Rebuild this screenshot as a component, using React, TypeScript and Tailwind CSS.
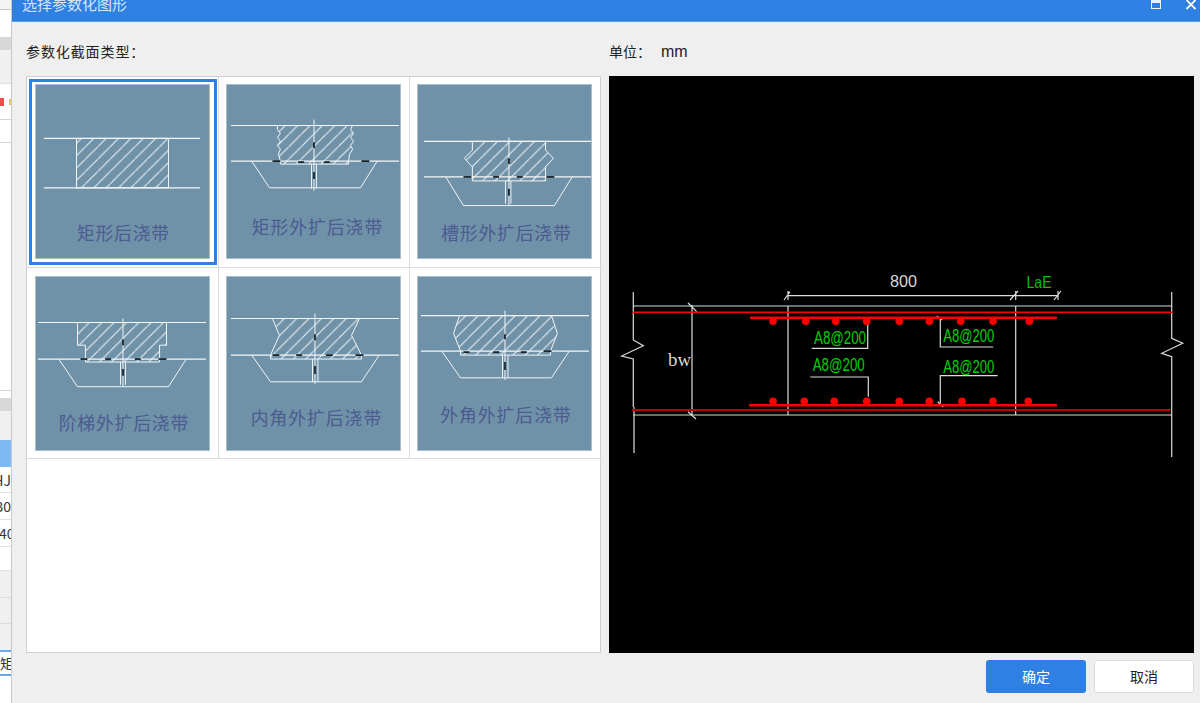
const font = "font-['Noto_Sans_CJK_SC','Noto_Sans',sans-serif]";

type Section = {
  name: string;
  cx: number;
  cy: number;
  tw: number;
  size: number;
  cell: string;
  xa: number;
  xb: number;
  y1: number;
  y2: number;
  shape: string;
  trap: string;
  axis: number;
  axisTop: number;
  axisEnd: number;
  jl: number;
  jr: number;
  jointTop: number;
  marks: number[][];
};

const sections: Section[] = [
  {
    name: "矩形外扩后浇带", cx: 91, cy: 145, tw: 132, size: 18,
    cell: "pl-[7px] pt-[7px] border-r border-b border-[#dcdcdc]",
    xa: 4, xb: 174, y1: 41, y2: 77,
    shape: "51,41 127,41 125,45 128,49 125,53 128,57 125,61 127,65 124,70 123,77 123,80 54,80 54,77 52,70 54,65 51,61 54,57 51,53 54,49 51,45",
    trap: "25,77 43,104 135,104 152,77", axis: 88, axisTop: 35, axisEnd: 107, jl: 85.5, jr: 90.5, jointTop: 80,
    marks: [[46, 77, 54, 77], [136, 77, 144, 77], [88, 58, 88, 64], [88, 88, 88, 95], [72, 78, 78, 78], [98, 78, 104, 78]],
  },
  {
    name: "槽形外扩后浇带", cx: 89, cy: 151, tw: 131, size: 18,
    cell: "pl-[7px] pt-[7px] border-b border-[#dcdcdc]",
    xa: 6, xb: 175, y1: 57, y2: 93,
    shape: "55,57 129,57 129,66 137,74 129,83 129,97 55,97 55,83 47,74 55,66",
    trap: "28,93 46,122 138,122 156,93", axis: 92, axisTop: 53, axisEnd: 122, jl: 88.5, jr: 94, jointTop: 97,
    marks: [[46, 93, 54, 93], [130, 93, 138, 93], [92, 74, 92, 80], [92, 105, 92, 112], [76, 93, 82, 93], [100, 93, 106, 93]],
  },
  {
    name: "阶梯外扩后浇带", cx: 88.5, cy: 149, tw: 131, size: 18,
    cell: "pl-[8px] pt-[8px] border-r border-b border-[#dcdcdc]",
    xa: 2, xb: 172, y1: 46, y2: 83,
    shape: "42,46 132,46 132,69 125,69 125,86 50,86 50,69 42,69",
    trap: "23,83 42,111 134,111 152,83", axis: 88, axisTop: 42, axisEnd: 111, jl: 85.5, jr: 90.5, jointTop: 86,
    marks: [[45, 83, 52, 83], [124, 83, 132, 83], [88, 63, 88, 69], [88, 93, 88, 100], [70, 83, 76, 83], [100, 83, 106, 83]],
  },
  {
    name: "内角外扩后浇带", cx: 90, cy: 144, tw: 132, size: 18,
    cell: "pl-[7px] pt-[8px] border-r border-b border-[#dcdcdc]",
    xa: 4, xb: 174, y1: 42, y2: 79,
    shape: "46,42 134,42 126,59 136,79 136,83 44,83 44,79 53,59",
    trap: "25,79 44,106 136,106 154,79", axis: 89, axisTop: 37, axisEnd: 108, jl: 86.5, jr: 92, jointTop: 83,
    marks: [[46, 79, 53, 79], [130, 79, 138, 79], [89, 58, 89, 64], [89, 90, 89, 98], [70, 79, 76, 79], [100, 79, 107, 79]],
  },
  {
    name: "外角外扩后浇带", cx: 88.5, cy: 141, tw: 132, size: 18,
    cell: "pl-[7px] pt-[8px] border-b border-[#dcdcdc]",
    xa: 3, xb: 173, y1: 39, y2: 75,
    shape: "42,39 135,39 141,57 134,75 134,79 43,79 43,75 36,57",
    trap: "24,75 43,102 135,102 153,75", axis: 88, axisTop: 34, axisEnd: 104, jl: 85.5, jr: 91, jointTop: 79,
    marks: [[127, 75, 135, 75], [88, 58, 88, 63], [88, 86, 88, 94], [46, 76, 52, 76], [76, 76, 82, 76], [104, 76, 110, 76]],
  },
];

const SectionThumb = ({ s }: { s: Section }) => (
  <svg width="175" height="175" viewBox="0 0 175 175" className="block bg-[#6f92a8] border border-[#a8bfcd]">
    <defs>
      <pattern id={`hatch-${s.cx}-${s.y1}`} width="12.5" height="12.5" patternUnits="userSpaceOnUse">
        <path d="M0 12.5 L12.5 0" stroke="#f0f4f6" strokeWidth="1" />
      </pattern>
    </defs>
    <polygon points={s.shape} fill={`url(#hatch-${s.cx}-${s.y1})`} stroke="#f3f6f8" strokeWidth="1" />
    <g stroke="#f3f6f8" strokeWidth="1.2" fill="none">
      <path d={`M${s.xa} ${s.y1} H${s.xb} M${s.xa} ${s.y2} H${s.xb}`} />
      <polyline points={s.trap} strokeWidth="1" />
      <path d={`M${s.axis} ${s.axisTop} V${s.axisEnd}`} strokeWidth="1" />
      <path d={`M${s.jl} ${s.jointTop} V${s.axisEnd - 2} M${s.jr} ${s.jointTop} V${s.axisEnd - 2}`} strokeWidth="1" />
    </g>
    {s.marks.map((m, i) => (
      <line key={i} x1={m[0]} y1={m[1]} x2={m[2]} y2={m[3]} stroke="#16242e" strokeWidth="1.8" />
    ))}
    <text
      x={s.cx}
      y={s.cy + 6}
      textAnchor="middle"
      fontSize={s.size}
      textLength={s.tw}
      lengthAdjust="spacing"
      fill="#4c5b90"
      className={font}
    >
      {s.name}
    </text>
  </svg>
);

const RectThumb = () => (
  <svg width="175" height="175" viewBox="0 0 175 175" className="block bg-[#6f92a8] border border-[#a8bfcd]">
    <defs>
      <pattern id="hatch-rect" width="12.5" height="12.5" patternUnits="userSpaceOnUse">
        <path d="M0 12.5 L12.5 0" stroke="#f0f4f6" strokeWidth="1" />
      </pattern>
    </defs>
    <rect x="41" y="54" width="93" height="50" fill="url(#hatch-rect)" stroke="#f3f6f8" />
    <path d="M8 54 H166 M8 104 H166" stroke="#f3f6f8" strokeWidth="1.2" />
    <text x="88" y="157" textAnchor="middle" fontSize="18" textLength="93" lengthAdjust="spacing" fill="#4c5b90" className={font}>
      矩形后浇带
    </text>
  </svg>
);

const topBars = [773, 805.7, 835.7, 866.7, 899.3, 929.3, 960.7, 993, 1029.3];
const bottomBars = [773, 804.3, 834.3, 866.7, 899.3, 929.3, 962, 993, 1028.3];

const BeamDrawing = () => (
  <svg viewBox="609 76 585 577" width="585" height="577" className="block bg-black">
    <g stroke="#dcdcdc" strokeWidth="1.2" fill="none">
      <path d="M633 306 H1172 M633 415 H1172" />
      <polyline points="633.3,292 633.3,340 643.3,345.7 621.7,356 633.3,359 633.3,407" />
      <path d="M634 407 V453" />
      <polyline points="1171.7,292 1171.7,338.3 1182.7,343.3 1161.7,353.3 1171.7,356.7 1171.7,457" />
      <path d="M692 305 V415 M688 303 L696.7 311.7 M688 411.7 L696 419" />
      <path d="M788 306 V415 M1015.7 306 V415" />
      <path d="M788 295.7 H1058 M784 300 L790 291.7 M1010 300 L1018 291 M1054 300 L1061 291 M788 291 V300 M1015.7 291 V300 M1058 291 V300" />
      <polyline points="811.7,348.3 867.7,348.3 867.7,323.3" />
      <polyline points="810.3,377 868.3,377 868.3,396.7" />
      <polyline points="993.3,347 940.3,347 940.3,319" />
      <path d="M936.7 316 L942.3 320" />
      <polyline points="997.7,375.7 940.3,375.7 940.3,403" />
      <path d="M937.7 401.7 L943.3 407" />
    </g>
    <path d="M633 312.3 H1172" stroke="#ff0000" strokeWidth="1.5" />
    <path d="M632 410 H1170" stroke="#c00000" strokeWidth="2" />
    <path d="M750 317.7 H1057 M749 405.3 H1057" stroke="#ff0000" strokeWidth="2.5" />
    {topBars.map((x) => (
      <circle key={x} cx={x} cy={321.3} r={3.8} fill="#ff0000" />
    ))}
    {bottomBars.map((x) => (
      <circle key={x} cx={x} cy={401.3} r={3.8} fill="#ff0000" />
    ))}
    <g className="font-['Liberation_Sans',sans-serif]">
      <text x="890" y="287" fontSize="17" textLength="27" lengthAdjust="spacingAndGlyphs" fill="#d8d8d8">800</text>
      <text x="668" y="365.5" fontSize="19" textLength="23" lengthAdjust="spacingAndGlyphs" fill="#d8d8d8" className="font-['Liberation_Serif',serif]">bw</text>
      <text x="1026.5" y="288" fontSize="17" textLength="25" lengthAdjust="spacingAndGlyphs" fill="#00c000">LaE</text>
      <text x="814" y="344" fontSize="18" textLength="52" lengthAdjust="spacingAndGlyphs" fill="#00d000">A8@200</text>
      <text x="812.7" y="371" fontSize="18" textLength="52" lengthAdjust="spacingAndGlyphs" fill="#00d000">A8@200</text>
      <text x="943.3" y="341.7" fontSize="18" textLength="51" lengthAdjust="spacingAndGlyphs" fill="#00d000">A8@200</text>
      <text x="943.3" y="372.7" fontSize="18" textLength="51" lengthAdjust="spacingAndGlyphs" fill="#00d000">A8@200</text>
    </g>
  </svg>
);

// the window behind the dialog, only a thin slice of it shows
const BackgroundSlice = () => (
  <div className={`w-[11px] h-[703px] shrink-0 flex flex-col overflow-hidden bg-white text-[14px] text-[#333] ${font}`}>
    <div className="h-[10px] bg-[#f4f4f4] border-b border-[#c9c9c9]" />
    <div className="h-[27px] bg-white" />
    <div className="h-[13px] bg-[#d8d8d8]" />
    <div className="h-[33px] bg-[#f0f0f0]" />
    <div className="h-[36px] bg-white flex items-center border-t border-[#e2e2e2]">
      <div className="w-[4px] h-[8px] bg-[#e5534b] ml-0" />
      <div className="w-[2px] h-[6px] bg-[#e9c46a] ml-[5px]" />
    </div>
    <div className="h-[23px] bg-white border-t border-[#d5d5d5]" />
    <div className="h-[248px] bg-white border-t border-[#d5d5d5]" />
    <div className="h-[8px] bg-white border-t border-[#d5d5d5]" />
    <div className="h-[13px] bg-[#d8d8d8]" />
    <div className="h-[29px] bg-[#f0f0f0]" />
    <div className="h-[27px] bg-[#7db8f5]" />
    <div className="h-[25px] flex items-center justify-end leading-none">HJ</div>
    <div className="h-[27px] flex items-center justify-end leading-none border-t border-[#e2e2e2]">30</div>
    <div className="h-[27px] flex items-center leading-none border-t border-[#e2e2e2]">
      <span className="-ml-[1px]">40</span>
    </div>
    <div className="h-[24px] border-t border-[#e2e2e2]" />
    <div className="h-[27px] bg-[#f0f0f0] border-t border-[#dcdcdc]" />
    <div className="h-[26px] bg-[#f0f0f0] border-t border-[#dcdcdc]" />
    <div className="h-[27px] bg-[#f0f0f0] border-t border-[#dcdcdc]" />
    <div className="h-[26px] flex items-center justify-end border-y-2 border-[#6aa9ee] leading-none">
      <span className="-mr-[3px]">矩</span>
    </div>
    <div className="flex-1 bg-white" />
  </div>
);

export default function App() {
  return (
    <div className={`relative w-[1200px] h-[703px] flex overflow-hidden bg-white ${font}`}>
      <BackgroundSlice />
      <div className="flex-1 flex flex-col bg-[#efefef] border-l border-[#c3cad2]">
        <div className="h-[22px] shrink-0 flex items-start justify-between overflow-hidden bg-[#2e80e3] border-b border-[#5a9bea] pl-[10px] pr-[4px]">
          <span className="-mt-[8px] text-[15px] leading-[24px] text-[#d5e5f8]">选择参数化图形</span>
          <div className="flex items-start gap-[25px]">
            <div className="w-[10px] h-[9px] border border-t-[3px] border-[#e9f1fb]" />
            <svg width="10" height="10" viewBox="0 0 10 10">
              <path d="M0.5 0 L9.5 9 M9.5 0 L0.5 9" stroke="#ffffff" strokeWidth="1.8" />
            </svg>
          </div>
        </div>

        <div className="flex-1 flex flex-col pl-[14px] pr-[6px]">
          <div className="h-[54px] flex gap-[8px] items-center pt-[5px] text-[14px] text-[#222]">
            <div className="w-[575px] tracking-[0.9px]">参数化截面类型：</div>
            <div className="flex items-center">
              <span className="w-[52px]">单位：</span>
              <span className="font-['Liberation_Sans',sans-serif] text-[16px]">mm</span>
            </div>
          </div>

          <div className="flex gap-[8px]">
            <div className="w-[575px] h-[577px] bg-white border border-[#d0d0d0]">
              <div className="grid grid-cols-[192px_191px_191px] grid-rows-[191px_191px]">
                <div className="relative pl-[8px] pt-[7px] border-r border-b border-[#dcdcdc]">
                  <RectThumb />
                  <div className="absolute left-[2px] top-[2px] w-[188px] h-[186px] border-[3px] border-[#2e80e3]" />
                </div>
                {sections.map((s) => (
                  <div key={s.name} className={s.cell}>
                    <SectionThumb s={s} />
                  </div>
                ))}
              </div>
            </div>
            <BeamDrawing />
          </div>

          <div className="flex justify-end gap-[8px] pt-[7px] text-[14px]">
            <button className="w-[100px] h-[33px] rounded-[3px] bg-[#2e80e3] text-white">确定</button>
            <button className="w-[100px] h-[33px] rounded-[3px] bg-white border border-[#dcdcdc] text-[#222]">取消</button>
          </div>
        </div>
      </div>
    </div>
  );
}
